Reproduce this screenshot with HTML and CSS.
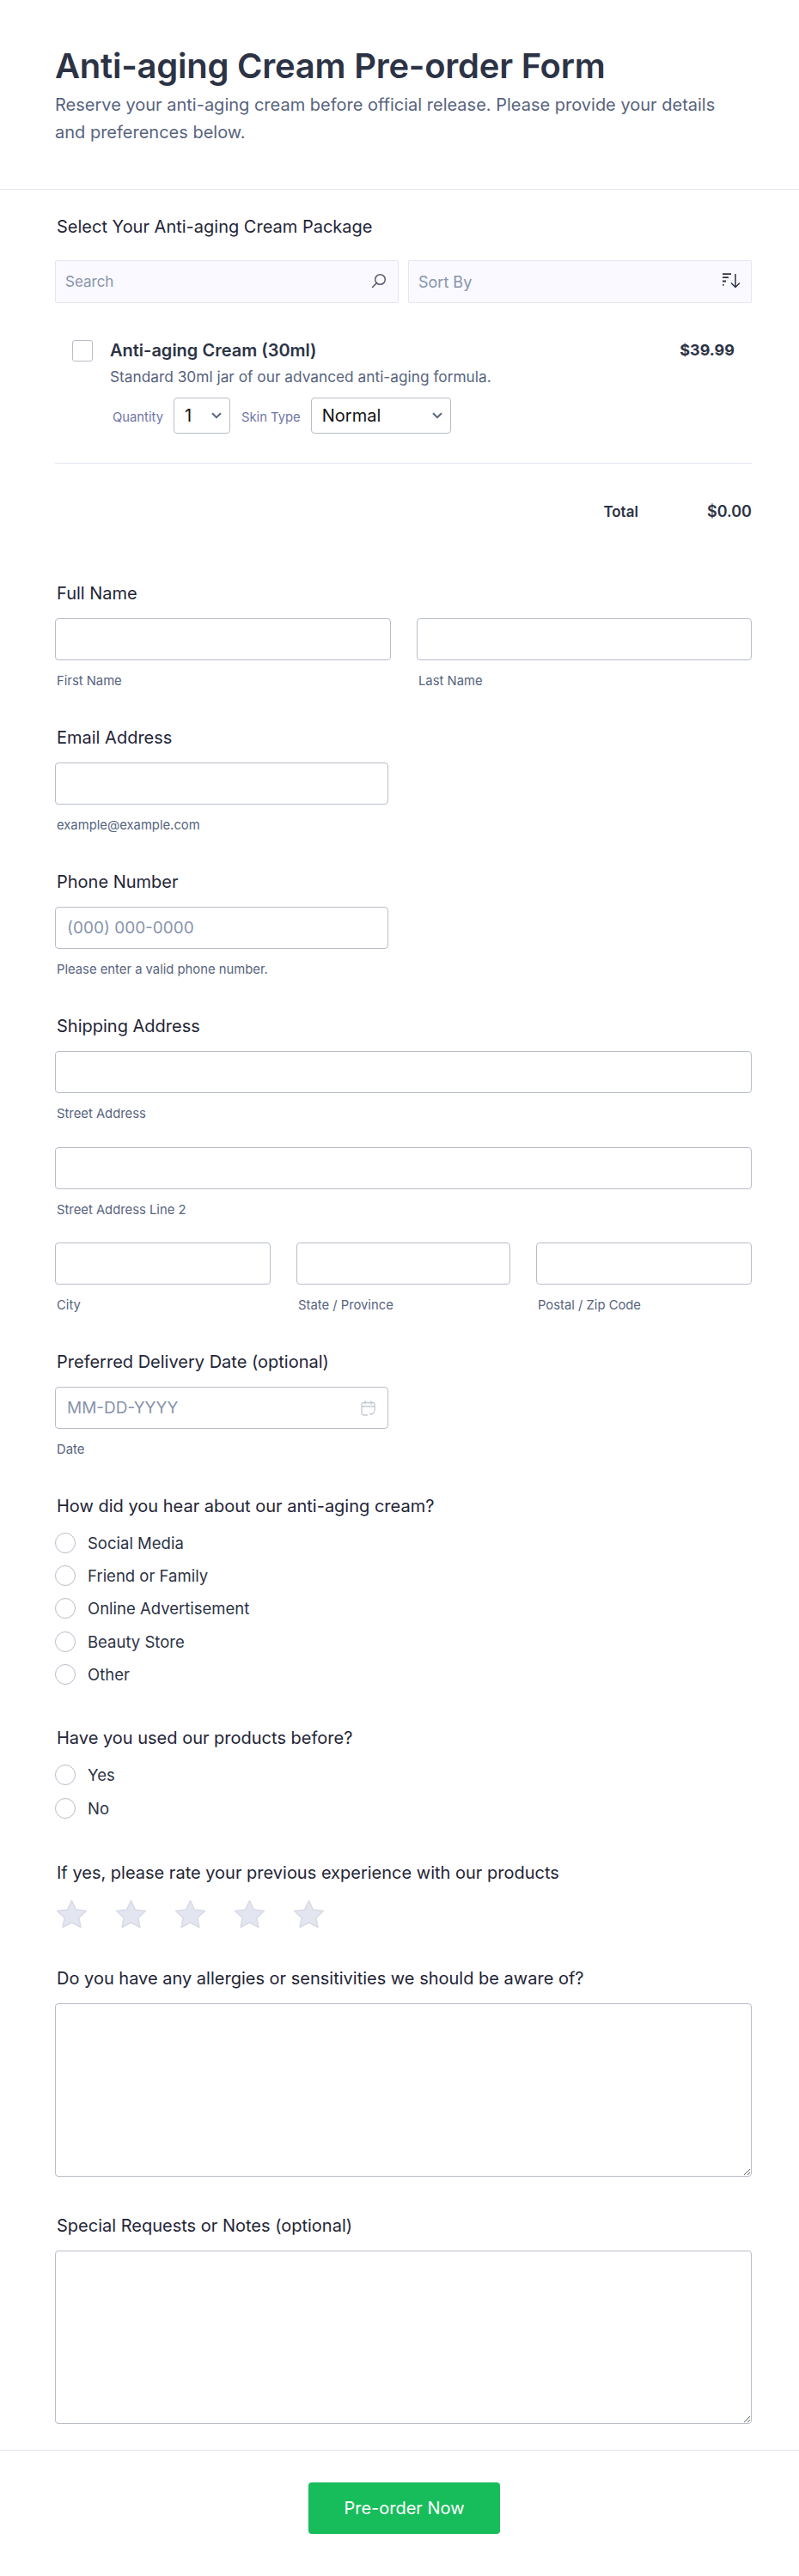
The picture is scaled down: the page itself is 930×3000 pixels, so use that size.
FILE: index.html
```html
<!DOCTYPE html>
<html lang="en">
<head>
  <meta charset="UTF-8" />
  <meta name="viewport" content="width=device-width, initial-scale=1.0" />
  <title>Anti-aging Cream Pre-order Form</title>
  <link rel="stylesheet" href="styles.css">
</head>
<body>
  <header class="form-header">
    <h1>Anti-aging Cream Pre-order Form</h1>
    <p>Reserve your anti-aging cream before official release. Please provide your details and preferences below.</p>
  </header>

  <form class="form-body">
    <section class="products">
      <div class="products-title">Select Your Anti-aging Cream Package</div>
      <div class="filters">
        <div class="filter-box">
          <input class="filter-input filter-input-sm" type="text" placeholder="Search" />
          <svg class="filter-icon" width="18" height="18" viewBox="0 0 18 18" fill="none" stroke="#5f5a6e" stroke-width="1.5" stroke-linecap="round"><circle cx="10.500" cy="7.500" r="5.800"/><path d="M6.400 11.600 1.500 16.500"/></svg>
        </div>
        <div class="filter-box">
          <input class="filter-input" type="text" placeholder="Sort By" />
          <svg class="filter-icon" width="20" height="18" viewBox="0 0 20 18" fill="none" stroke="#2c3345" stroke-width="1.800"><path d="M0 1.200h10M0 5.200h7M0 9.500h4M0 13.800h1.500"/><path stroke-width="1.500" d="M15 1v15.500M10 11.500l5 5 5-5"/></svg>
        </div>
      </div>

      <div class="product">
        <input class="product-check" type="checkbox" />
        <div class="product-info">
          <div class="product-name">Anti-aging Cream (30ml)</div>
          <div class="product-desc">Standard 30ml jar of our advanced anti-aging formula.</div>
          <div class="product-options">
            <label class="option-label">Quantity</label>
            <div class="select-wrap select-qty">
              <select><option>1</option><option>2</option><option>3</option></select>
              <svg class="chevron" width="12" height="8" viewBox="0 0 12 8" fill="none" stroke="#57647e" stroke-width="2"><path d="M1 1.200 6 6.200l5-5"/></svg>
            </div>
            <label class="option-label">Skin Type</label>
            <div class="select-wrap select-skin">
              <select><option>Normal</option><option>Dry</option><option>Oily</option></select>
              <svg class="chevron" width="12" height="8" viewBox="0 0 12 8" fill="none" stroke="#57647e" stroke-width="2"><path d="M1 1.200 6 6.200l5-5"/></svg>
            </div>
          </div>
        </div>
        <div class="product-price">$39.99</div>
      </div>

      <div class="total">
        <span class="total-label">Total</span>
        <span class="total-value">$0.00</span>
      </div>
    </section>

    <section class="field field-name">
      <label class="field-label">Full Name</label>
      <div class="cols cols-2">
        <div><input class="text-input" type="text" /><div class="sub">First Name</div></div>
        <div><input class="text-input" type="text" /><div class="sub">Last Name</div></div>
      </div>
    </section>

    <section class="field">
      <label class="field-label">Email Address</label>
      <div class="half"><input class="text-input" type="email" /><div class="sub">example@example.com</div></div>
    </section>

    <section class="field">
      <label class="field-label">Phone Number</label>
      <div class="half"><input class="text-input" type="tel" placeholder="(000) 000-0000" /><div class="sub">Please enter a valid phone number.</div></div>
    </section>

    <section class="field">
      <label class="field-label">Shipping Address</label>
      <div class="address">
        <div><input class="text-input" type="text" /><div class="sub">Street Address</div></div>
        <div><input class="text-input" type="text" /><div class="sub">Street Address Line 2</div></div>
        <div class="cols cols-3">
          <div><input class="text-input" type="text" /><div class="sub">City</div></div>
          <div><input class="text-input" type="text" /><div class="sub">State / Province</div></div>
          <div><input class="text-input" type="text" /><div class="sub">Postal / Zip Code</div></div>
        </div>
      </div>
    </section>

    <section class="field">
      <label class="field-label">Preferred Delivery Date (optional)</label>
      <div class="half">
        <div class="date-wrap">
          <input class="text-input" type="text" placeholder="MM-DD-YYYY" />
          <svg class="date-icon" width="17" height="18" viewBox="0 0 17 18" fill="none" stroke="#c3c7d4" stroke-width="1.300" stroke-linecap="round"><path d="M7.500 17H3A2 2 0 0 1 1 15V4.500a2 2 0 0 1 2-2h11a2 2 0 0 1 2 2V12"/><path d="M1 7h15M5 .8v3.400M12 .8v3.400"/><path d="m10.500 15 1.800 1.500 3.500-3"/></svg>
        </div>
        <div class="sub">Date</div>
      </div>
    </section>

    <section class="field">
      <label class="field-label">How did you hear about our anti-aging cream?</label>
      <div class="radios">
        <label class="radio"><input type="radio" name="heard" />Social Media</label>
        <label class="radio"><input type="radio" name="heard" />Friend or Family</label>
        <label class="radio"><input type="radio" name="heard" />Online Advertisement</label>
        <label class="radio"><input type="radio" name="heard" />Beauty Store</label>
        <label class="radio"><input type="radio" name="heard" />Other</label>
      </div>
    </section>

    <section class="field field-used">
      <label class="field-label">Have you used our products before?</label>
      <div class="radios">
        <label class="radio"><input type="radio" name="used" />Yes</label>
        <label class="radio"><input type="radio" name="used" />No</label>
      </div>
    </section>

    <section class="field field-rating">
      <label class="field-label">If yes, please rate your previous experience with our products</label>
      <div class="stars">
        <svg class="star" width="37" height="34" viewBox="0 0 37 34"><path d="M18.500 1.500 23.500 12 35.500 13.500 26.800 21.500 29 32.500 18.500 27 8 32.500 10.200 21.500 1.500 13.500 13.500 12Z"/></svg>
        <svg class="star" width="37" height="34" viewBox="0 0 37 34"><path d="M18.500 1.500 23.500 12 35.500 13.500 26.800 21.500 29 32.500 18.500 27 8 32.500 10.200 21.500 1.500 13.500 13.500 12Z"/></svg>
        <svg class="star" width="37" height="34" viewBox="0 0 37 34"><path d="M18.500 1.500 23.500 12 35.500 13.500 26.800 21.500 29 32.500 18.500 27 8 32.500 10.200 21.500 1.500 13.500 13.500 12Z"/></svg>
        <svg class="star" width="37" height="34" viewBox="0 0 37 34"><path d="M18.500 1.500 23.500 12 35.500 13.500 26.800 21.500 29 32.500 18.500 27 8 32.500 10.200 21.500 1.500 13.500 13.500 12Z"/></svg>
        <svg class="star" width="37" height="34" viewBox="0 0 37 34"><path d="M18.500 1.500 23.500 12 35.500 13.500 26.800 21.500 29 32.500 18.500 27 8 32.500 10.200 21.500 1.500 13.500 13.500 12Z"/></svg>
      </div>
    </section>

    <section class="field field-allergies">
      <label class="field-label">Do you have any allergies or sensitivities we should be aware of?</label>
      <textarea class="text-area"></textarea>
    </section>

    <section class="field">
      <label class="field-label">Special Requests or Notes (optional)</label>
      <textarea class="text-area"></textarea>
    </section>
  </form>

  <footer class="form-footer">
    <button class="submit" type="button">Pre-order Now</button>
  </footer>
</body>
</html>
```

FILE: styles.css
```css
* {
  box-sizing: border-box;
}
body {
  margin: 0;
  background: #fff;
  color: #2c3345;
  font-family: Inter, "Liberation Sans", sans-serif;
}
.form-header {
  height: 221px;
  padding: 52px 64px 0;
  border-bottom: 1px solid #e3e5f0;
}
.form-header h1 {
  margin: 0;
  font-size: 40px;
  line-height: 50px;
  font-weight: 600;
  letter-spacing: -0.25px;
}
.form-header p {
  max-width: 780px;
  margin: 4px 0 0;
  font-size: 20px;
  line-height: 32px;
  color: #57647e;
}
.form-body {
  padding: 0 55px 0 64px;
}

/* product list */
.products-title {
  margin: 32px 0 0 2px;
  font-size: 20px;
  line-height: 22px;
  font-weight: 400;
  color: #1f2537;
}
.filters {
  display: grid;
  grid-template-columns: 1fr 1fr;
  gap: 11px;
  margin-top: 28px;
}
.filter-box {
  position: relative;
  height: 50px;
  background: #f9f9ff;
  border: 1px solid #e3e5f5;
  border-radius: 2px;
}
.filter-input {
  width: 100%;
  height: 100%;
  padding: 0 44px 0 11px;
  border: 0;
  background: transparent;
  font: 18px Inter, sans-serif;
}
.filter-input-sm {
  font-size: 17px;
}
.filter-input::placeholder {
  color: #8894ab;
}
.filter-icon {
  position: absolute;
  top: 14px;
  right: 13px;
}
.product {
  display: flex;
  align-items: flex-start;
  padding: 43px 20px 34px 20px;
  border-bottom: 1px solid #e3e5f0;
}
.product-check {
  appearance: none;
  flex: none;
  width: 24px;
  height: 25px;
  margin: 0 20px 0 0;
  background: #fff;
  border: 1px solid #b8bdc9;
  border-radius: 3px;
}
.product-info {
  flex: 1;
}
.product-name {
  font-size: 20px;
  line-height: 24px;
  font-weight: 600;
}
.product-desc {
  margin-top: 7px;
  font-size: 17.3px;
  line-height: 24px;
  color: #57647e;
}
.product-options {
  display: flex;
  align-items: center;
  margin-top: 12px;
}
.option-label {
  padding: 4px 0 0 3px;
  font-size: 14.800px;
  color: #6f76a7;
}
.select-wrap {
  position: relative;
  height: 42px;
  margin-left: 12px;
}
.select-qty {
  width: 66px;
  margin-right: 10px;
}
.select-skin {
  width: 163px;
}
.select-wrap select {
  appearance: none;
  width: 100%;
  height: 100%;
  padding: 0 24px 0 12px;
  background: #fff;
  border: 1px solid #b8bdc9;
  border-radius: 4px;
  color: #111;
  font: 20px Inter, sans-serif;
}
.chevron {
  position: absolute;
  top: 17px;
  right: 10px;
}
.product-price {
  font-size: 18px;
  line-height: 24px;
  font-weight: 700;
}
.total {
  display: flex;
  justify-content: flex-end;
  gap: 80px;
  margin-top: 45px;
  font-size: 18px;
  line-height: 22px;
  font-weight: 600;
}
.total-label {
  font-size: 17px;
}

/* fields */
.field {
  margin-top: 46px;
}
.field-name {
  margin-top: 73px;
}
.field-used {
  margin-top: 44px;
}
.field-rating {
  margin-top: 45px;
}
.field-allergies {
  margin-top: 47px;
}
.field-label {
  display: block;
  margin-left: 2px;
  font-size: 20px;
  line-height: 22px;
  font-weight: 400;
  color: #1f2537;
}
.text-input {
  display: block;
  width: 100%;
  height: 49px;
  padding: 0 13px;
  background: #fff;
  border: 1px solid #b8bdc9;
  border-radius: 4px;
  font: 19px Inter, sans-serif;
}
.text-input::placeholder {
  color: #8894ab;
}
.field > .half,
.field > .cols,
.field > .address {
  margin-top: 18px;
}
.sub {
  margin: 15px 0 0 2px;
  font-size: 14.800px;
  line-height: 18px;
  color: #57647e;
}
.cols {
  display: grid;
  gap: 30px;
}
.cols-2 {
  grid-template-columns: 391px 390px;
}
.cols-3 {
  grid-template-columns: 251px 249px 251px;
}
.half {
  width: 388px;
}
.address {
  display: grid;
  gap: 29.500px;
}
.date-wrap {
  position: relative;
}
.date-icon {
  position: absolute;
  top: 16px;
  right: 15px;
}
.radios {
  display: grid;
  margin-top: 12.500px;
}
.radio {
  display: flex;
  align-items: center;
  gap: 14px;
  height: 38.400px;
  font-size: 18.500px;
  color: #2c3345;
}
.radio input {
  appearance: none;
  flex: none;
  width: 24px;
  height: 24px;
  margin: 0;
  background: #fff;
  border: 1px solid #b8bdc9;
  border-radius: 50%;
}
.stars {
  display: flex;
  gap: 32px;
  margin: 20px 0 0 1px;
}
.star {
  fill: #e3e5f0;
  stroke: #d8dbe6;
  stroke-width: 1.500;
  stroke-linejoin: round;
}
.text-area {
  display: block;
  width: 100%;
  height: 202px;
  margin-top: 18px;
  padding: 12px;
  background: #fff;
  border: 1px solid #b8bdc9;
  border-radius: 4px;
}
.form-footer {
  display: flex;
  justify-content: center;
  margin-top: 30px;
  padding: 37px 55px 0 66px;
  border-top: 1px solid #e3e5f0;
}
.submit {
  width: 223px;
  height: 60px;
  background: #18bd5b;
  border: 0;
  border-radius: 4px;
  color: #fff;
  font: 20px Inter, sans-serif;
}
```
